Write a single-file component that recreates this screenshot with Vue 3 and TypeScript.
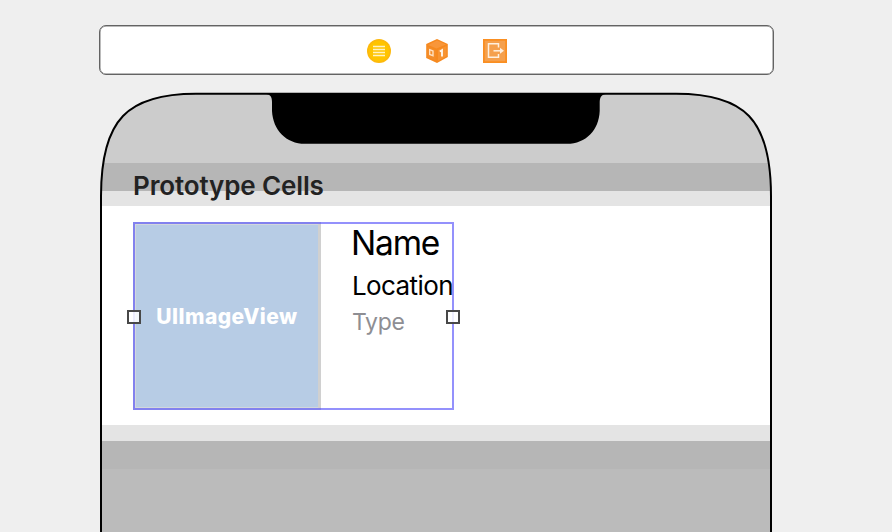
<script setup lang="ts">
const cell = {
  name: 'Name',
  location: 'Location',
  type: 'Type',
}
</script>

<template>
  <main class="canvas">
    <header class="dock">
      <svg class="icon" viewBox="0 0 26 26">
        <circle cx="13" cy="13" r="12" fill="#fdb90c" />
        <circle cx="13" cy="13" r="10.3" fill="#ffc400" />
        <path d="M7 8.5h12M7 11.5h12M7 14.5h12M7 17.5h12" stroke="#fff3c4" stroke-width="1.5" />
      </svg>
      <svg class="icon" viewBox="0 0 26 26">
        <path d="M13 1L23.8 6V19L13 25L2.2 20V6Z" fill="#f6891f" />
        <path d="M13 2.5L22 6.5L12.5 10.5L4 7Z" fill="#f8963a" />
        <path d="M14 12L22.5 8V18.3L14 23Z" fill="#f79433" />
        <path d="M3.5 8.5L11.5 12V22.5L3.5 19Z" fill="#f38d2b" />
        <path d="M5.7 11.7L9 13V17.7L5.7 16.4Z" fill="none" stroke="#ffe0bf" stroke-width="1.4" />
        <path d="M15.8 13.5L18 12.2V18.500" fill="none" stroke="#fff5e9" stroke-width="1.9" />
      </svg>
      <svg class="icon" viewBox="0 0 26 26">
        <rect x="1" y="1" width="24" height="24" fill="#fa8f22" />
        <rect x="2.8" y="2.8" width="20.4" height="20.4" fill="#f5a04d" />
        <path d="M16.500 9.500V5.800H6.500V19.300H16.500V16" fill="none" stroke="#fff0df" stroke-width="1.5" />
        <path d="M11.5 12.8H19" stroke="#fff0df" stroke-width="1.5" />
        <path d="M18 9.800L22 12.800L18 15.800Z" fill="#fff0df" />
      </svg>
    </header>

    <section class="phone">
      <div class="screen">
        <div class="status"></div>
        <div class="section-header"><span class="section-title">Prototype Cells</span></div>
        <div class="gap-strip top"></div>
        <div class="row">
          <div class="stack">
            <div class="image-view"><span class="image-label">UIImageView</span></div>
            <div class="labels">
              <span class="name">{{ cell.name }}</span>
              <span class="location">{{ cell.location }}</span>
              <span class="type">{{ cell.type }}</span>
            </div>
            <i class="outline"></i>
            <i class="handle left"></i>
            <i class="handle right"></i>
          </div>
        </div>
        <div class="gap-strip"></div>
        <div class="footer-band"></div>
        <div class="table-bg"></div>
      </div>
      <svg class="frame" viewBox="0 0 672 440">
        <path d="M163 1.5C170 2 172 4 172 10V19C173 38 186 51.8 205 51.8H467C486 51.8 499 38 499.7 19V10C500 4 502 2 509 1.5Z" />
        <path class="bezel" d="M1 450V104C1 27 28 1.700 96 1.700H576C644 1.700 671 27 671 104V450" />
      </svg>
    </section>
  </main>
</template>

<style>
body {
  background: #efefef;
  overflow: hidden;
}
</style>

<style scoped>
.canvas {
  box-sizing: border-box;
  width: 892px;
  height: 532px;
  padding: 25px 0 0 99px;
  overflow: hidden;
  background: #efefef;
  font-family: Inter, "Liberation Sans", sans-serif;
}
.dock {
  box-sizing: border-box;
  width: 675px;
  height: 50px;
  padding: 1px 0 0 1px;
  border: 1.5px solid #636363;
  box-shadow: inset 0 0 0 0.5px #777;
  border-radius: 7px;
  background: #fff;
  display: flex;
  justify-content: center;
  align-items: center;
  gap: 32px;
}
.icon {
  width: 26px;
  height: 26px;
}
.phone {
  position: relative;
  width: 672px;
  height: 440px;
  margin: 17px 0 0 1px;
}
.screen {
  height: 440px;
  display: flex;
  flex-direction: column;
  background: #bbb;
  clip-path: path("M1 440V104C1 27 28 1.7 96 1.7H576C644 1.7 671 27 671 104V440Z");
}
.status {
  height: 71px;
  background: #ccc;
}
.section-header {
  height: 28px;
  padding-left: 33px;
  background: #b6b6b6;
}
.section-title {
  position: relative;
  display: block;
  line-height: 46px;
  font-size: 26px;
  font-weight: 600;
  letter-spacing: -0.13px;
  color: #222;
  white-space: nowrap;
}
.gap-strip {
  height: 16px;
  background: #e4e4e4;
}
.gap-strip.top {
  height: 15px;
}
.row {
  box-sizing: border-box;
  height: 219px;
  padding: 16px 0 0 33px;
  background: #fff;
}
.stack {
  position: relative;
  width: 321px;
  height: 188px;
  display: flex;
}
.image-view {
  box-sizing: border-box;
  flex: none;
  width: 188px;
  height: 188px;
  border: 3px solid #d2d7dc;
  border-right-color: #d0d0d0;
  background: #b7cce5;
  display: flex;
  align-items: center;
  justify-content: center;
}
.image-label {
  padding-top: 1px;
  color: #fff;
  font-size: 21px;
  font-weight: 800;
  letter-spacing: 0.45px;
  line-height: 24px;
}
.labels {
  display: flex;
  flex-direction: column;
  padding-left: 30px;
  white-space: nowrap;
}
.name {
  line-height: 43px;
  font-size: 33.5px;
  letter-spacing: -1.2px;
  color: #000;
}
.location {
  padding-left: 1px;
  line-height: 42px;
  font-size: 26px;
  letter-spacing: -0.6px;
  color: #000;
}
.type {
  padding-left: 1px;
  line-height: 31px;
  font-size: 23px;
  letter-spacing: -0.3px;
  color: #8e8e93;
}
.outline {
  position: absolute;
  inset: 0;
  border: 2px solid rgba(77, 72, 250, 0.6);
}
.handle {
  position: absolute;
  top: 88px;
  box-sizing: border-box;
  width: 14px;
  height: 14px;
  border: 2px solid #484848;
  background: rgba(255, 255, 255, 0.85);
}
.handle.left {
  left: -6px;
}
.handle.right {
  right: -6px;
}
.footer-band {
  height: 28px;
  background: #b6b6b6;
}
.table-bg {
  flex: 1;
  background: #bbb;
}
.frame {
  position: absolute;
  inset: 0;
  width: 672px;
  height: 440px;
}
.bezel {
  fill: none;
  stroke: #000;
  stroke-width: 2;
}
</style>
